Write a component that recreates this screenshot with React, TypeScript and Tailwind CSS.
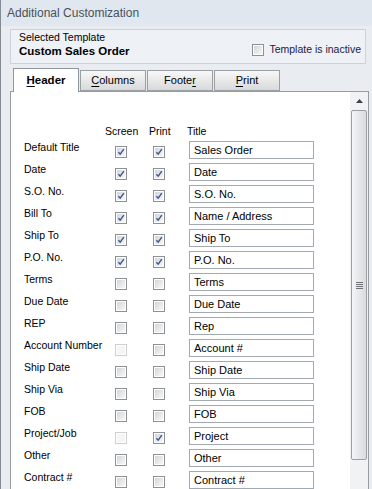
import React from "react";

type Box = "on" | "off" | "dis";

type Row = { label: string; screen: Box; print: Box; title: string };

const rows: Row[] = [
  { label: "Default Title", screen: "on", print: "on", title: "Sales Order" },
  { label: "Date", screen: "on", print: "on", title: "Date" },
  { label: "S.O. No.", screen: "on", print: "on", title: "S.O. No." },
  { label: "Bill To", screen: "on", print: "on", title: "Name / Address" },
  { label: "Ship To", screen: "on", print: "on", title: "Ship To" },
  { label: "P.O. No.", screen: "on", print: "on", title: "P.O. No." },
  { label: "Terms", screen: "off", print: "off", title: "Terms" },
  { label: "Due Date", screen: "off", print: "off", title: "Due Date" },
  { label: "REP", screen: "off", print: "off", title: "Rep" },
  { label: "Account Number", screen: "dis", print: "off", title: "Account #" },
  { label: "Ship Date", screen: "off", print: "off", title: "Ship Date" },
  { label: "Ship Via", screen: "off", print: "off", title: "Ship Via" },
  { label: "FOB", screen: "off", print: "off", title: "FOB" },
  { label: "Project/Job", screen: "dis", print: "on", title: "Project" },
  { label: "Other", screen: "off", print: "off", title: "Other" },
  { label: "Contract #", screen: "off", print: "off", title: "Contract #" },
];

function Check({ state }: { state: Box }) {
  const dis = state === "dis";
  return (
    <div
      className={`w-[12px] h-[12px] border ${
        dis ? "border-[#cdd0d3]" : "border-[#8e9194]"
      } bg-white p-[1px]`}
    >
      <div
        className={`relative w-full h-full ${
          dis
            ? "bg-[#f5f5f5]"
            : "bg-linear-to-br from-[#d3d5d8] to-[#f7f8f8]"
        }`}
      >
        {state === "on" && (
          <svg viewBox="0 0 8 8" className="absolute inset-0 w-full h-full">
            <path
              d="M1.4 4.2 L3.2 6.2 L6.8 1.2"
              fill="none"
              stroke="#3e5590"
              strokeWidth="1.4"
            />
          </svg>
        )}
      </div>
    </div>
  );
}

function Tab({
  u,
  rest,
  active,
  pre,
}: {
  u: string;
  rest: string;
  active?: boolean;
  pre?: string;
}) {
  return (
    <div
      className={
        active
          ? "relative z-10 -mb-px h-[24px] w-[66px] border border-b-0 border-[#8d96a0] bg-white flex items-center justify-center font-bold text-[11.5px]"
          : "h-[21px] w-[66px] border border-[#9a9fa5] bg-linear-to-b from-[#f8f8f8] to-[#d8d9da] flex items-center justify-center text-[11px]"
      }
    >
      {pre}
      <span className="underline underline-offset-2">{u}</span>
      {rest}
    </div>
  );
}

export default function App() {
  return (
    <div
      className="w-[372px] h-[489px] overflow-hidden flex flex-col bg-[#e9edf2] border-l border-[#858b93] text-black"
      style={{ fontFamily: '"Liberation Sans", Arial, sans-serif' }}
    >
      <div className="shrink-0 h-[26px] flex items-center pl-[6px] bg-[#e1e7ee] text-[12px] text-[#47505c]">
        Additional Customization
      </div>

      <div className="shrink-0 mt-[3px] ml-[9px] mr-[6px] h-[35px] border border-[#cbd2da] bg-[#eef1f5] flex items-end justify-between pl-[8px] pr-[4px]">
        <div className="flex flex-col pb-[4px]">
          <span className="text-[10.5px] leading-[13px]">Selected Template</span>
          <span className="text-[11.5px] leading-[15px] font-bold">
            Custom Sales Order
          </span>
        </div>
        <div className="flex items-center gap-[5px] pb-[5px]">
          <Check state="off" />
          <span className="text-[10.5px] text-[#1c2140]">
            Template is inactive
          </span>
        </div>
      </div>

      <div className="shrink-0 mt-[4px] h-[23px] flex items-end pl-[12px] gap-[1px]">
        <Tab active u="H" rest="eader" />
        <Tab u="C" rest="olumns" />
        <Tab pre="Foote" u="r" rest="" />
        <Tab u="P" rest="rint" />
      </div>

      <div className="ml-[9px] mr-[3px] h-[420px] shrink-0 border border-[#959ca4] bg-white flex">
        <div className="w-[339px] pt-[30px] text-[10.5px]">
          <div className="h-[19px] flex items-center pl-[94px]">
            <span className="w-[44px]">Screen</span>
            <span className="w-[38px]">Print</span>
            <span>Title</span>
          </div>
          {rows.map((r) => (
            <div key={r.label} className="h-[22px] flex items-start pl-[13px]">
              <div className="w-[91px] leading-[13px] whitespace-nowrap">
                {r.label}
              </div>
              <div className="w-[38px] pt-[5px]">
                <Check state={r.screen} />
              </div>
              <div className="w-[36px] pt-[5px]">
                <Check state={r.print} />
              </div>
              <div className="w-[125px] h-[18px] border border-[#a2a9b1] pl-[4px] text-[11px] leading-[16px]">
                {r.title}
              </div>
            </div>
          ))}
        </div>

        <div className="w-[18px] bg-[#f1f2f3] flex flex-col items-center">
          <div className="h-[17px] w-full flex items-center justify-center">
            <svg width="7" height="4" viewBox="0 0 7 4">
              <path d="M0 4 L3.5 0 L7 4 Z" fill="#404040" />
            </svg>
          </div>
          <div className="mt-[1px] w-[16px] h-[350px] border border-[#9b9fa4] rounded-[2px] bg-linear-to-r from-[#f4f5f6] to-[#d9dbdd] flex flex-col items-center justify-center gap-[1px]">
            <div className="w-[7px] h-px bg-[#6d7278]" />
            <div className="w-[7px] h-px bg-[#6d7278]" />
            <div className="w-[7px] h-px bg-[#6d7278]" />
            <div className="w-[7px] h-px bg-[#6d7278]" />
          </div>
        </div>
      </div>
    </div>
  );
}
